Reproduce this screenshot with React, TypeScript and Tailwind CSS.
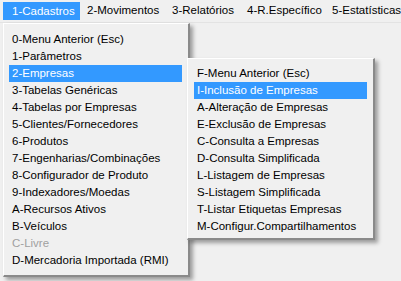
import React from "react";

const font = { fontFamily: '"Liberation Sans", Arial, sans-serif' };

const menu1 = [
  "0-Menu Anterior (Esc)",
  "1-Parâmetros",
  "2-Empresas",
  "3-Tabelas Genéricas",
  "4-Tabelas por Empresas",
  "5-Clientes/Fornecedores",
  "6-Produtos",
  "7-Engenharias/Combinações",
  "8-Configurador de Produto",
  "9-Indexadores/Moedas",
  "A-Recursos Ativos",
  "B-Veículos",
  "C-Livre",
  "D-Mercadoria Importada (RMI)",
];

const menu2 = [
  "F-Menu Anterior (Esc)",
  "I-Inclusão de Empresas",
  "A-Alteração de Empresas",
  "E-Exclusão de Empresas",
  "C-Consulta a Empresas",
  "D-Consulta Simplificada",
  "L-Listagem de Empresas",
  "S-Listagem Simplificada",
  "T-Listar Etiquetas Empresas",
  "M-Configur.Compartilhamentos",
];

function Item({ label, active, disabled }: { label: string; active?: boolean; disabled?: boolean }) {
  return (
    <div
      className={
        "h-[17px] leading-[17px] pl-[3px] whitespace-nowrap " +
        (active ? "bg-[#3399ff] text-white" : disabled ? "text-[#a0a0a0]" : "text-black")
      }
    >
      {label}
    </div>
  );
}

export default function App() {
  return (
    <div className="relative w-[401px] h-[281px] bg-[#f0f0f0] overflow-hidden text-[11.5px]" style={font}>
      <div className="flex items-center h-[23px] border-b border-[#e3e3e3] pl-[3px] text-black whitespace-nowrap">
        <div className="shrink-0 w-[77px] h-[18px] leading-[18px] pl-[9px] bg-[#3399ff] text-white">1-Cadastros</div>
        <div className="shrink-0 w-[85px] pl-[7px]">2-Movimentos</div>
        <div className="shrink-0 w-[75px] pl-[7px]">3-Relatórios</div>
        <div className="shrink-0 w-[85px] pl-[7px]">4-R.Específico</div>
        <div className="shrink-0 pl-[7px]">5-Estatísticas</div>
      </div>

      <div className="absolute left-[3px] top-[23px] w-[187px] h-[254px] bg-[#f0f0f0] border-t border-l border-white border-r-2 border-b-2 border-r-[#8a8a8a] border-b-[#8a8a8a] shadow-[3px_3px_4px_rgba(0,0,0,0.35)] pt-[7px] pl-[5px] pr-[6px]">
        {menu1.map((m, i) => (
          <Item key={m} label={m} active={i === 2} disabled={m === "C-Livre"} />
        ))}
      </div>

      <div className="absolute left-[187px] top-[58px] w-[188px] h-[182px] bg-[#f0f0f0] border-t border-l border-white border-r-2 border-b-2 border-r-[#8a8a8a] border-b-[#8a8a8a] shadow-[3px_3px_4px_rgba(0,0,0,0.35)] pt-[6px] pl-[6px] pr-[6px]">
        {menu2.map((m, i) => (
          <Item key={m} label={m} active={i === 1} />
        ))}
      </div>
    </div>
  );
}
